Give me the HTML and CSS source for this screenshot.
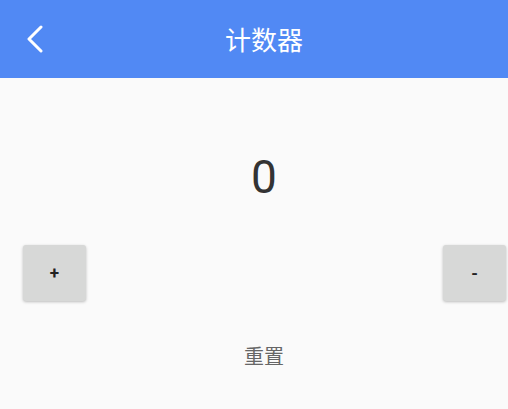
FILE: index.html
```html
<!DOCTYPE html>
<html lang="zh">
<head>
<meta charset="utf-8">
<link rel="stylesheet" href="styles.css">
</head>
<body>
<div class="app">
  <header class="bar">
    <div class="bar-left">
      <svg class="back" width="18" height="28" viewBox="0 0 18 28"><path d="M15 2 L3 14 L15 26" fill="none" stroke="#fff" stroke-width="3" stroke-linecap="round" stroke-linejoin="round"/></svg>
    </div>
    <div class="title">计数器</div>
    <div class="bar-right"></div>
  </header>
  <main class="content">
    <div class="count">0</div>
    <div class="buttons">
      <button class="btn">+</button>
      <button class="btn">-</button>
    </div>
    <div class="reset">重置</div>
  </main>
</div>
</body>
</html>
```
FILE: styles.css
```css
html, body {
  margin: 0;
  padding: 0;
  overflow: hidden;
  background: #fafafa;
}
.app {
  width: 528px;
  font-family: Roboto, "Noto Sans CJK SC", sans-serif;
}
.bar {
  height: 78px;
  background: #5189f4;
  display: grid;
  grid-template-columns: 1fr auto 1fr;
  align-items: center;
}
.bar-left {
  padding-left: 26px;
  display: flex;
  align-items: center;
}
.back { display: block; }
.title {
  color: #fff;
  font-size: 26px;
  line-height: 30px;
  font-family: "Noto Sans CJK SC", sans-serif;
}
.content {
  display: flex;
  flex-direction: column;
}
.count {
  margin-top: 72px;
  text-align: center;
  font-size: 46px;
  line-height: 54px;
  color: #333;
}
.buttons {
  margin-top: 41px;
  display: flex;
  justify-content: space-between;
  padding: 0 22px 0 23px;
}
.btn {
  width: 63px;
  height: 56px;
  border: none;
  border-radius: 3px;
  background: #d7d8d7;
  box-shadow: 0 1px 3px rgba(0,0,0,0.25);
  font-family: Roboto, sans-serif;
  font-weight: bold;
  font-size: 17px;
  color: #222;
  padding: 0;
}
.reset {
  margin-top: 41px;
  text-align: center;
  font-size: 20px;
  line-height: 28px;
  color: #666;
  font-family: "Noto Sans CJK SC", sans-serif;
}
```
